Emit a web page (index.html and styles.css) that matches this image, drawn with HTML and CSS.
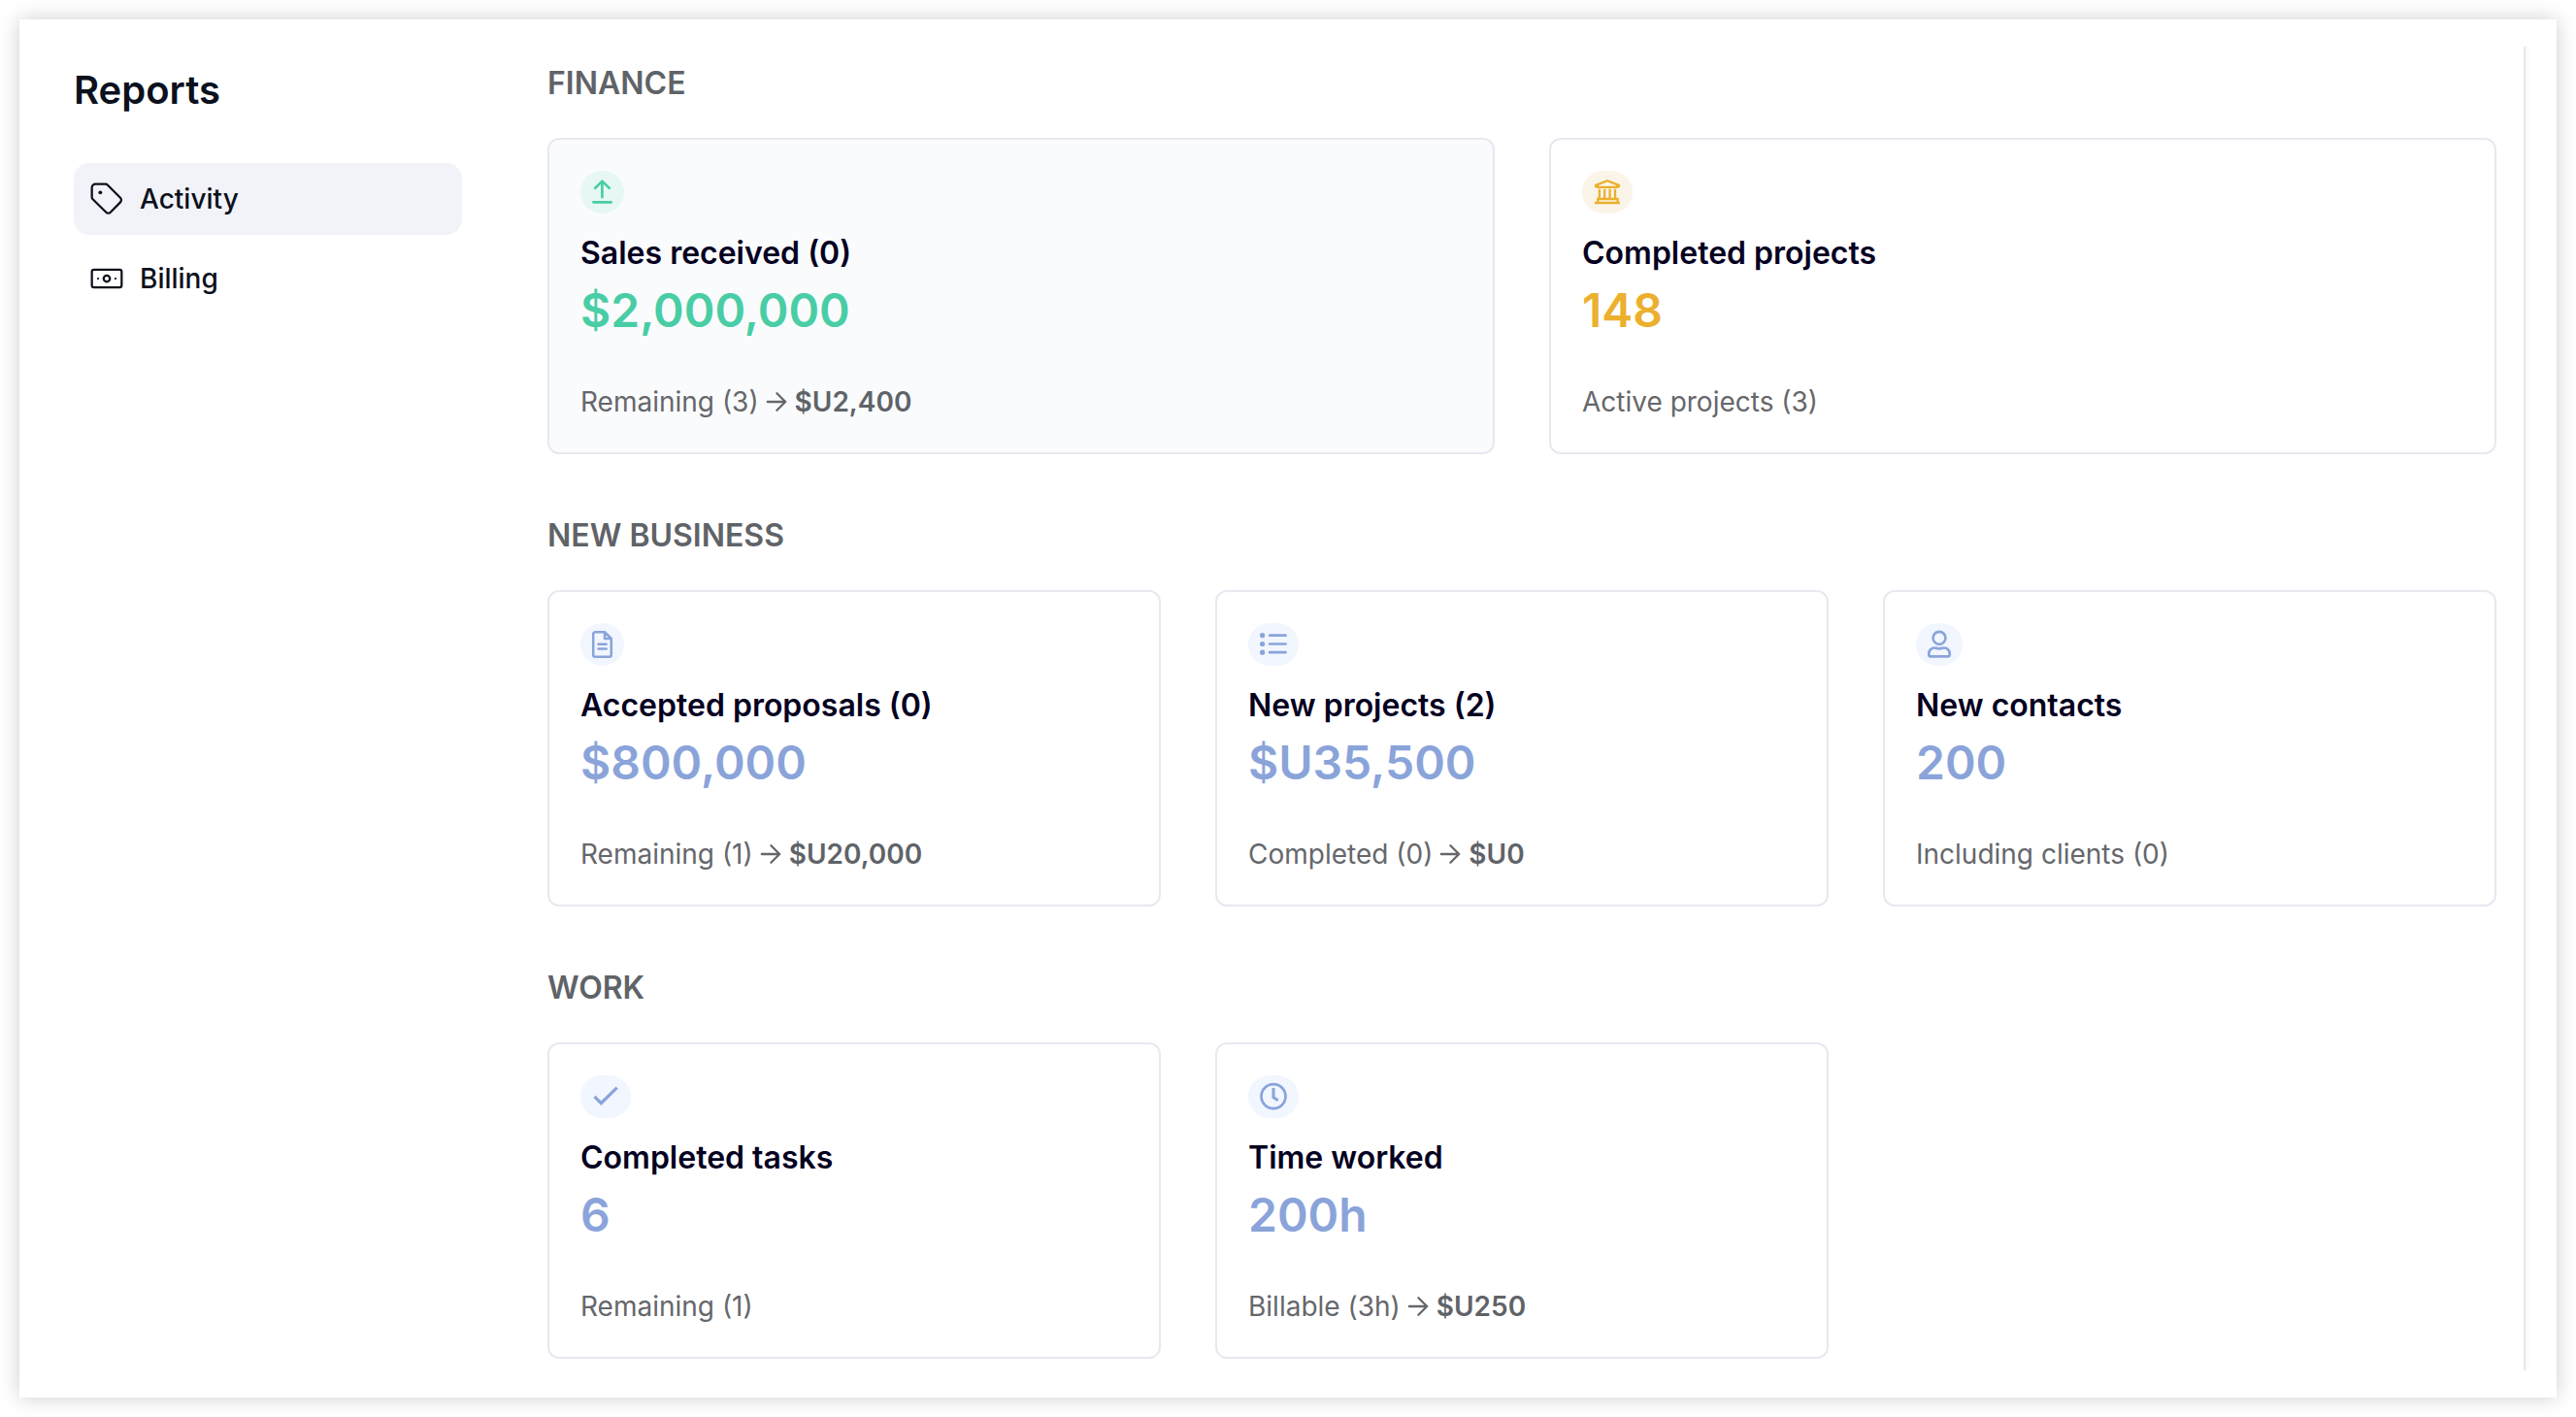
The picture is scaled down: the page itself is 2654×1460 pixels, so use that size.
FILE: index.html
```html
<!DOCTYPE html>
<html lang="en">
<head>
<meta charset="utf-8">
<title>Reports</title>
<link rel="stylesheet" href="styles.css">
</head>
<body>
<div class="panel">
  <aside class="sidebar">
    <h1 class="sidebar-title">Reports</h1>
    <nav class="nav">
      <a class="nav-item active">
        <svg class="nav-icon" viewBox="0 0 24 24"><path d="M5 2.8h6.2a1.9 1.9 0 0 1 1.4.6l7.8 7.9a1.9 1.9 0 0 1 0 2.7l-6.1 6.2a1.9 1.9 0 0 1-2.7 0l-8.1-7.9a1.9 1.9 0 0 1-.7-1.5V5A2.2 2.2 0 0 1 5 2.8Z"/><path stroke-width="2.3" d="M8 8h.01"/></svg>
        Activity
      </a>
      <a class="nav-item">
        <svg class="nav-icon" viewBox="0 0 24 24"><rect x="2.8" y="6.5" width="18.4" height="11" rx="1.3"/><circle cx="12" cy="12" r="1.95"/><path d="M6.6 12h.01M17.4 12h.01"/></svg>
        Billing
      </a>
    </nav>
  </aside>
  <main class="content">
    <section class="section">
      <h2 class="section-title">FINANCE</h2>
      <div class="cards two">
        <article class="card green highlighted">
          <span class="badge"><svg width="21" height="28" viewBox="0 0 21 28"><path d="M10.4 19.2V3M3.1 9.9l7.3-7.3 7.4 7.3M1.4 24.3h18.3"/></svg></span>
          <h3 class="card-title">Sales received (0)</h3>
          <p class="value">$2,000,000</p>
          <p class="note"><span>Remaining (3)</span><svg class="arrow" viewBox="0 0 27 28"><path d="M3.8 14h18.4M13.4 5.2l8.8 8.8-8.8 8.8"/></svg><b>$U2,400</b></p>
        </article>
        <article class="card amber">
          <span class="badge"><svg width="28" height="28" viewBox="0 0 28 28"><path class="square" stroke-width="2.3" d="M2.1 8V6.9L14 2.3l11.9 4.6V8H24v.8H4V8ZM5.9 10.8V21M11.2 10.8V21M16.6 10.8V21M22 10.8V21M4.2 25v-4h20.4v4M1 25h26"/></svg></span>
          <h3 class="card-title">Completed projects</h3>
          <p class="value">148</p>
          <p class="note"><span>Active projects (3)</span></p>
        </article>
      </div>
    </section>
    <section class="section">
      <h2 class="section-title">NEW BUSINESS</h2>
      <div class="cards three">
        <article class="card blue">
          <span class="badge"><svg width="21" height="28" viewBox="0 0 21 28"><path stroke-width="2.5" d="M13 1.2H3.2a2 2 0 0 0-2 2v21.6a2 2 0 0 0 2 2h14.6a2 2 0 0 0 2-2V8ZM13 1.2V8h6.8M6.5 13.8h8.2M6.5 18.4h8.2"/></svg></span>
          <h3 class="card-title">Accepted proposals (0)</h3>
          <p class="value">$800,000</p>
          <p class="note"><span>Remaining (1)</span><svg class="arrow" viewBox="0 0 27 28"><path d="M3.8 14h18.4M13.4 5.2l8.8 8.8-8.8 8.8"/></svg><b>$U20,000</b></p>
        </article>
        <article class="card blue">
          <span class="badge"><svg width="28" height="28" viewBox="0 0 28 28"><path d="M10.1 4.7h16.5M10.1 13.5h16.5M10.1 22.2h16.5"/><path stroke-width="5.2" d="M2.6 4.7h.01M2.6 13.5h.01M2.6 22.2h.01"/></svg></span>
          <h3 class="card-title">New projects (2)</h3>
          <p class="value">$U35,500</p>
          <p class="note"><span>Completed (0)</span><svg class="arrow" viewBox="0 0 27 28"><path d="M3.8 14h18.4M13.4 5.2l8.8 8.8-8.8 8.8"/></svg><b>$U0</b></p>
        </article>
        <article class="card blue">
          <span class="badge"><svg width="24" height="28" viewBox="0 0 24.5 28"><circle cx="12.25" cy="7.2" r="6.6"/><path d="M7.2 17.6c1.8 0 2.6.8 5.05.8s3.25-.8 5.05-.8c3.3 0 5.9 2.7 5.9 6v1.2c0 1-.7 1.8-1.7 1.8H3c-1 0-1.7-.8-1.7-1.8v-1.2c0-3.3 2.6-6 5.9-6Z"/></svg></span>
          <h3 class="card-title">New contacts</h3>
          <p class="value">200</p>
          <p class="note"><span>Including clients (0)</span></p>
        </article>
      </div>
    </section>
    <section class="section">
      <h2 class="section-title">WORK</h2>
      <div class="cards three">
        <article class="card blue">
          <span class="badge"><svg width="28" height="28" viewBox="0 0 28 28"><path class="square" stroke-width="3.2" d="M2.5 13.8l6.8 6.9L25.7 4.7"/></svg></span>
          <h3 class="card-title">Completed tasks</h3>
          <p class="value">6</p>
          <p class="note"><span>Remaining (1)</span></p>
        </article>
        <article class="card blue">
          <span class="badge"><svg width="28" height="28" viewBox="0 0 28 28"><circle cx="14" cy="13.6" r="12.5"/><path class="square" stroke-width="3" d="M14 5.1v9.6l4.7 3.1"/></svg></span>
          <h3 class="card-title">Time worked</h3>
          <p class="value">200h</p>
          <p class="note"><span>Billable (3h)</span><svg class="arrow" viewBox="0 0 27 28"><path d="M3.8 14h18.4M13.4 5.2l8.8 8.8-8.8 8.8"/></svg><b>$U250</b></p>
        </article>
      </div>
    </section>
  </main>
</div>
</body>
</html>
```
FILE: styles.css
```css
* { box-sizing: border-box; }

body {
  margin: 0;
  height: 1460px;
  padding: 20px;
  overflow: hidden;
  background: #fff;
  font-family: Inter, "Liberation Sans", sans-serif;
}

h1, h2, h3, p { margin: 0; font-weight: 600; }

.panel {
  display: flex;
  height: 1420px;
  padding: 28px;
  background: #fff;
  box-shadow: 0 0 20px rgba(0, 0, 0, .2);
}

.sidebar { width: 516px; padding: 17px 88px 0 28px; }

.sidebar-title {
  color: #0b111d;
  font-size: 40px;
  line-height: 56px;
}

.nav {
  display: flex;
  flex-direction: column;
  gap: 8px;
  margin-top: 47px;
}

.nav-item {
  display: flex;
  align-items: center;
  gap: 14px;
  height: 74px;
  padding: 0 14px;
  border-radius: 16px;
  color: #0b111d;
  font-size: 28px;
  font-weight: 500;
}

.nav-item.active { background: #f2f3f8; }

.nav-icon {
  width: 40px;
  height: 40px;
  fill: none;
  stroke: currentColor;
  stroke-width: 1.35;
  stroke-linecap: round;
  stroke-linejoin: round;
}

.content {
  display: flex;
  flex: 1;
  flex-direction: column;
  gap: 64px;
  padding: 18px 30px 0 0;
  border-right: 4px solid #fafafa;
  box-shadow: inset -2px 0 #e7e7e7;
}

.section-title {
  margin-bottom: 36px;
  color: #5f6368;
  font-size: 32px;
  line-height: 40px;
}

.cards { display: grid; gap: 56px; }
.two { grid-template-columns: repeat(2, 1fr); }
.three { grid-template-columns: repeat(3, 1fr); }

.card {
  height: 326px;
  padding: 32px;
  border: 2px solid #e9e8f1;
  border-radius: 12px;
}

.highlighted { background: #fafbfd; }

.green { --accent: #49cda5; --tint: #e7f7f3; }
.amber { --accent: #ebb02d; --tint: #fbf4e9; }
.blue { --accent: #8aa4da; --tint: #f1f6ff; }

.badge {
  display: flex;
  width: fit-content;
  padding: 8px 12px;
  border-radius: 22px;
  background: var(--tint);
}

.badge svg {
  overflow: visible;
  fill: none;
  stroke: var(--accent);
  stroke-width: 2.7;
  stroke-linecap: round;
  stroke-linejoin: round;
}

.badge .square { stroke-linecap: butt; stroke-linejoin: miter; }

.card-title {
  margin-top: 21px;
  color: #05001f;
  font-size: 32px;
  line-height: 40px;
}

.value {
  margin-top: 9px;
  color: var(--accent);
  font-size: 48px;
  line-height: 60px;
}

.note {
  display: flex;
  align-items: center;
  gap: 5px;
  margin-top: 44px;
  color: #65676b;
  font-size: 28px;
  font-weight: 400;
  line-height: 40px;
}

.note b { font-weight: 600; color: #5f6368; }

.arrow {
  width: 27px;
  height: 28px;
  fill: none;
  stroke: currentColor;
  stroke-width: 2.3;
  stroke-linecap: round;
  stroke-linejoin: round;
}
```
